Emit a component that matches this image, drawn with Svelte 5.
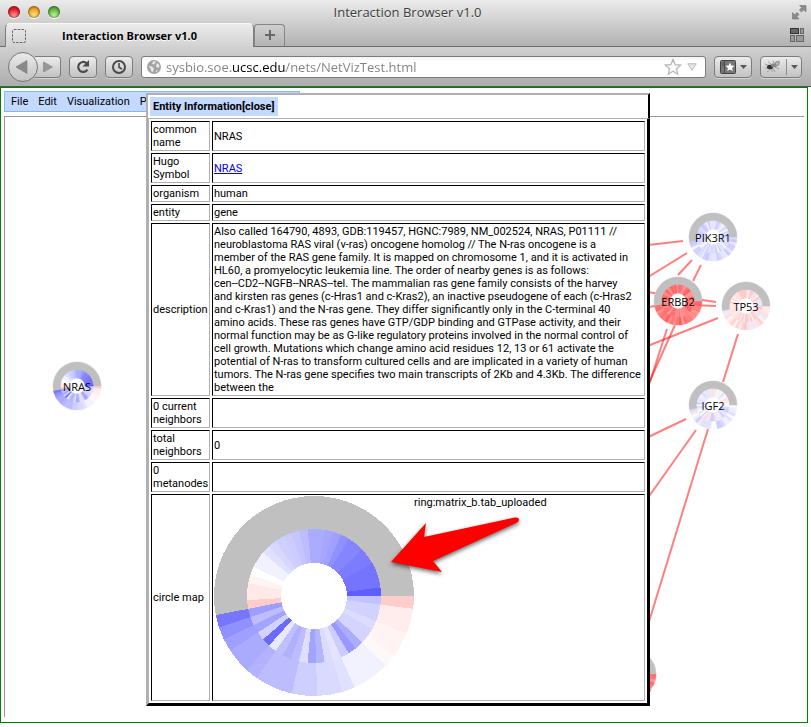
<script>
  const STEP = (Math.PI * 2) / 49;

  // [segment count, fill], clockwise from three o'clock
  const nrasOuter = [
    [1, '#ffcccc'], [2, '#ffecec'], [2, '#fff3f3'], [1, '#fff8f8'], [3, '#f2f2ff'], [1, '#e0e0ff'],
    [2, '#dadaff'], [2, '#ceceff'], [3, '#bcbcff'], [1, '#b2b2ff'], [2, '#aaaaff'], [1, '#9f9fff'],
    [1, '#9090ff'], [1, '#7676ff'], [26, '#c0c0c0']
  ];
  const nrasInner = [
    [1, '#c2c2ff'], [2, '#d2d2ff'], [1, '#dcdcff'], [2, '#d4d4ff'], [1, '#acacff'], [1, '#9898ff'],
    [1, '#ccccff'], [1, '#e4e4ff'], [1, '#dcdcff'], [1, '#b4b4ff'], [1, '#a2a2ff'], [1, '#dedeff'],
    [1, '#bcbcff'], [1, '#b0b0ff'], [1, '#c0c0ff'], [1, '#e8e8ff'], [1, '#6a6aff'], [1, '#d2d2ff'],
    [1, '#a4a4ff'], [1, '#bcbcff'], [1, '#9e9eff'], [1, '#ffcccc'], [2, '#ffe9e9'], [1, '#fff4f4'],
    [1, '#ffffff'], [2, '#f2f2ff'], [1, '#e0e0ff'], [1, '#d8d8ff'], [1, '#ceceff'], [1, '#ccccff'],
    [1, '#c6c6ff'], [1, '#bcbcff'], [2, '#acacff'], [1, '#a6a6ff'], [1, '#a0a0ff'], [1, '#9090ff'],
    [2, '#8585ff'], [2, '#7c7cff'], [3, '#7474ff'], [1, '#5e5eff']
  ];

  function wedge(from, to, r0, r1) {
    const a = from * STEP;
    const b = to * STEP;
    const p = (r, t) => `${(r * Math.cos(t)).toFixed(2)} ${(r * Math.sin(t)).toFixed(2)}`;
    const large = b - a > Math.PI ? 1 : 0;
    return `M${p(r1, a)}A${r1} ${r1} 0 ${large} 1 ${p(r1, b)}L${p(r0, b)}A${r0} ${r0} 0 ${large} 0 ${p(r0, a)}Z`;
  }

  function ring(list, r0, r1) {
    let at = 0;
    return list.map(([n, fill]) => {
      const d = wedge(at, at + n, r0, r1);
      at += n;
      return { d, fill };
    });
  }

  const bigMap = [...ring(nrasOuter, 67, 100), ...ring(nrasInner, 33, 67)];

  function mixed(palette, seed) {
    let s = seed;
    const next = () => {
      s = (s * 16807) % 2147483647;
      return palette[s % palette.length];
    };
    const outer = Array.from({ length: 23 }, () => [1, next()]);
    const inner = Array.from({ length: 49 }, () => [1, next()]);
    return [...ring([...outer, [26, '#c0c0c0']], 67, 100), ...ring(inner, 33, 67)];
  }

  const blues = ['#dcdcff', '#d0d0ff', '#e6e6ff', '#c8c8ff', '#e0e0ff', '#f6f6ff', '#d8d8ff'];
  const reds = ['#ff6a6a', '#ff7c7c', '#ff5c5c', '#ff8a8a', '#ff7070', '#ff9494', '#ff7676'];
  const pinks = ['#ffdcdc', '#ffe6e6', '#ffd0d0', '#fff2f2', '#ffe0e0', '#ffc8c8', '#e8e8ff', '#ffeaea'];
  const pale = ['#e6e6ff', '#dcdcff', '#f0f0ff', '#ffe6e6', '#e2e2ff', '#fafaff', '#cfcfff', '#ececff'];

  const nodes = [
    { name: 'NRAS', x: 77, y: 386, map: bigMap },
    { name: 'PIK3R1', x: 713, y: 237, map: mixed(blues, 91) },
    { name: 'ERBB2', x: 678, y: 301, map: mixed(reds, 417) },
    { name: 'TP53', x: 746, y: 306, map: mixed(pinks, 233) },
    { name: 'IGF2', x: 713, y: 405, map: mixed(pale, 59) },
    { name: '', x: 632, y: 674, map: mixed(reds, 77) }
  ];

  const edges = [
    [640, 246, 683, 241], [640, 282, 687, 253], [678, 275, 692, 260], [693, 281, 701, 265],
    [640, 291, 716, 302], [640, 309, 678, 301], [690, 305, 716, 306], [640, 349, 718, 318], [646, 394, 667, 329],
    [644, 394, 675, 325], [738, 334, 723, 382], [640, 441, 686, 419], [640, 509, 696, 430],
    [640, 651, 708, 429], [646, 692, 651, 690]
  ];

  const menus = ['File', 'Edit', 'Visualization', 'Pa'];

  const lines = [
    'Also called 164790, 4893, GDB:119457, HGNC:7989, NM_002524, NRAS, P01111 //',
    'neuroblastoma RAS viral (v-ras) oncogene homolog // The N-ras oncogene is a',
    'member of the RAS gene family. It is mapped on chromosome 1, and it is activated in',
    'HL60, a promyelocytic leukemia line. The order of nearby genes is as follows:',
    'cen--CD2--NGFB--NRAS--tel. The mammalian ras gene family consists of the harvey',
    'and kirsten ras genes (c-Hras1 and c-Kras2), an inactive pseudogene of each (c-Hras2',
    'and c-Kras1) and the N-ras gene. They differ significantly only in the C-terminal 40',
    'amino acids. These ras genes have GTP/GDP binding and GTPase activity, and their',
    'normal function may be as G-like regulatory proteins involved in the normal control of',
    'cell growth. Mutations which change amino acid residues 12, 13 or 61 activate the',
    'potential of N-ras to transform cultured cells and are implicated in a variety of human',
    'tumors. The N-ras gene specifies two main transcripts of 2Kb and 4.3Kb. The difference',
    'between the'
  ];

  let url = $state('sysbio.soe.ucsc.edu/nets/NetVizTest.html');
</script>

<div class="window">
  <header class="chrome">
    <div class="titlebar">
      <div class="lights">
        <button class="light red" aria-label="Close window"></button>
        <button class="light amber" aria-label="Minimize window"></button>
        <button class="light green" aria-label="Zoom window"></button>
      </div>
      <div class="title">Interaction Browser v1.0</div>
      <button class="bare full" aria-label="Full screen">
        <svg width="16" height="16" viewBox="0 0 16 16" fill="#8b8b8b" stroke="#777" stroke-width=".6">
          <path d="M8.500 1.500H15V8L12.800 5.800L10.500 8L8.400 5.900L10.700 3.600Z" />
          <path d="M1.500 8.500V15H8L5.800 12.800L8 10.500L6 8.400L3.700 10.700Z" />
        </svg>
      </button>
    </div>

    <div class="tabs">
      <div class="tab">
        <svg width="14" height="14" viewBox="0 0 14 14"><rect x=".5" y=".5" width="13" height="13" rx="1.500" fill="none" stroke="#666" stroke-dasharray="2.500 1.200" /></svg>
        <span>Interaction Browser v1.0</span>
      </div>
      <button class="newtab" aria-label="New tab">
        <svg width="12" height="12" viewBox="0 0 12 12"><path d="M6 1V11M1 6H11" stroke="#666" stroke-width="2" /></svg>
      </button>
      <button class="bare groups" aria-label="Tab groups">
        <svg width="14" height="14" viewBox="0 0 14 14" stroke="#666">
          <rect x=".5" y=".5" width="8" height="5" fill="#666" stroke="#333" />
          <rect x="10.500" y=".5" width="3" height="5" fill="#999" />
          <rect x=".5" y="7.500" width="4" height="6" fill="#999" />
          <rect x="6.500" y="7.500" width="7" height="6" fill="#999" />
        </svg>
      </button>
    </div>

    <div class="toolbar">
      <div class="nav">
        <button class="back" aria-label="Back">
          <svg width="14" height="14" viewBox="0 0 14 14"><path d="M1 7L12 .5V13.500Z" fill="#8a8a8a" stroke="#777" stroke-width=".6" /></svg>
        </button>
        <button class="btn forward" aria-label="Forward">
          <svg width="10" height="12" viewBox="0 0 10 12"><path d="M9.500 6L.5 1V11Z" fill="#999" stroke="#808080" stroke-width=".6" /></svg>
        </button>
      </div>
      <button class="btn square" aria-label="Reload">
        <svg width="16" height="16" viewBox="0 0 16 16" fill="none"><path d="M11.500 4.200A5 5 0 1 0 12.400 10.700" stroke="#4a4a4a" stroke-width="2.200" /><path d="M14 1V7.500H7.500Z" fill="#4a4a4a" /></svg>
      </button>
      <button class="btn square" aria-label="History">
        <svg width="16" height="16" viewBox="0 0 16 16" fill="none" stroke="#4a4a4a" stroke-width="2"><circle cx="8" cy="8" r="6" /><path d="M8 4V8.200L11 10.200" stroke-width="1.600" /></svg>
      </button>
      <div class="address">
        <svg width="14" height="14" viewBox="0 0 14 14">
          <circle cx="7" cy="7" r="7" fill="#a2a2a2" />
          <path d="M6 1.500L9 1.200L8.200 3.300L6.500 4.500L5 4ZM10.500 3L12.500 5.500L11.500 8L9 7L9.300 4.500ZM1.500 6L5 6.500L7 8.500L6 12L4.300 11.500L3.500 8.800ZM8.500 11L11 9.500L9.500 12.300Z" fill="#e8e8e8" />
        </svg>
        <input class="url" type="text" aria-label="Address" bind:value={url} />
        <button class="bare" aria-label="Bookmark this page">
          <svg width="18" height="18" viewBox="0 0 18 18"><path d="M9 1.500L11.200 6.600L16.700 7.100L12.500 10.700L13.800 16.200L9 13.300L4.200 16.200L5.500 10.700L1.300 7.100L6.800 6.600Z" fill="#fafafa" stroke="#b4b4b4" stroke-width="1.200" /></svg>
        </button>
        <button class="bare" aria-label="Address history">
          <svg width="10" height="8" viewBox="0 0 10 8"><path d="M.7 .8H9.300L5 7.200Z" fill="#e6e6e6" stroke="#b8b8b8" /></svg>
        </button>
      </div>
      <button class="btn marks" aria-label="Bookmarks">
        <svg width="16" height="14" viewBox="0 0 16 14"><rect x=".5" y=".5" width="15" height="13" rx="1" fill="#777" stroke="#444" /><path d="M4.500 1V13M2 3H4M2 5H4" stroke="#444" stroke-width=".8" /><path d="M10 2.500L11.300 5.500L14.500 5.800L12.100 7.900L12.800 11L10 9.400L7.200 11L7.900 7.900L5.500 5.800L8.700 5.500Z" fill="#fff" /></svg>
        <svg width="7" height="4" viewBox="0 0 7 4"><path d="M0 0H7L3.500 4Z" fill="#5a5a5a" /></svg>
      </button>
      <button class="btn bug" aria-label="Firebug">
        <svg width="18" height="16" viewBox="0 0 18 16" fill="none">
          <path d="M1 5L6 7M4 2.500L8 6M1 9L6 9M3 13L7 9.500M9 9L11 13M11 8L15 10M8 13L8 9" stroke="#999" stroke-width=".9" />
          <ellipse cx="6" cy="8" rx="3" ry="2.200" fill="#333" />
          <ellipse cx="10" cy="6.300" rx="3" ry="2" fill="#888" />
          <circle cx="13.300" cy="4.500" r="2" fill="#b9b9b9" stroke="#888" />
          <path d="M14 3L16 1.500M10 4L9 1.500" stroke="#999" />
        </svg>
        <i></i>
        <svg width="7" height="4" viewBox="0 0 7 4"><path d="M0 0H7L3.500 4Z" fill="#5a5a5a" /></svg>
      </button>
    </div>
  </header>

  <main class="page">
    <nav class="menu">
      {#each menus as item}<button>{item}</button>{/each}
    </nav>
    <div class="canvas"></div>

    <svg class="graph" width="800" height="625" viewBox="4 92 800 625">
      <g stroke="#ff0000" stroke-opacity=".5" stroke-width="2">
        {#each edges as [x1, y1, x2, y2]}<line {x1} {y1} {x2} {y2} />{/each}
      </g>
      {#each nodes as node}
        <g transform={`translate(${node.x} ${node.y})`}>
          <circle r="24" fill="#fff" />
          <g transform="scale(.24)" stroke-width="2">
            {#each node.map as part}<path d={part.d} fill={part.fill} stroke={part.fill} />{/each}
          </g>
          <text y="5" text-anchor="middle">{node.name}</text>
        </g>
      {/each}
    </svg>

    <section class="dialog" aria-label="Entity Information">
      <div class="head"><div class="caption">Entity Information<button>[close]</button></div></div>
      <table>
        <tbody>
          <tr><th scope="row">common name</th><td>NRAS</td></tr>
          <tr><th scope="row">Hugo Symbol</th><td><a href="#nras">NRAS</a></td></tr>
          <tr><th scope="row">organism</th><td>human</td></tr>
          <tr><th scope="row">entity</th><td>gene</td></tr>
          <tr><th scope="row">description</th><td class="text">{#each lines as line}{line}<br />{/each}</td></tr>
          <tr><th scope="row">0 current neighbors</th><td></td></tr>
          <tr><th scope="row">total neighbors</th><td>0</td></tr>
          <tr><th scope="row">0 metanodes</th><td></td></tr>
          <tr>
            <th scope="row">circle map</th>
            <td>
              <div class="map">
                <svg width="200" height="200" viewBox="-100 -100 200 200" shape-rendering="crispEdges">
                  {#each bigMap as part}<path d={part.d} fill={part.fill} />{/each}
                </svg>
                <span>ring:matrix_b.tab_uploaded</span>
              </div>
            </td>
          </tr>
        </tbody>
      </table>
    </section>

    <svg class="arrow" width="140" height="68" viewBox="386 510 140 68">
      <path d="M391 561L426 522L424 536L515 516.500Q519 516 519 519Q519 521 516 522L433 560L442 571Z" fill="#ff0000" />
    </svg>
  </main>
</div>

<style>
  :global(body) { margin: 0; background: #fff; }
  .window {
    display: flex;
    flex-direction: column;
    min-height: 100vh;
    font: 11px/13px Roboto, "Open Sans", sans-serif;
    color: #000;
  }
  button { font: inherit; color: inherit; margin: 0; padding: 0; border: 0; background: none; }
  svg { display: block; flex: none; }
  .bare { display: flex; }

  .chrome { border-bottom: 1px solid #555; background: linear-gradient(#ebebeb, #b2b2b2 46px, #d0d0d0 47px, #adadad); }
  .titlebar { display: flex; align-items: center; height: 23px; padding: 0 4px 0 8px; }
  .lights { display: flex; gap: 8px; flex: 1; }
  .full { flex: 1; justify-content: flex-end; }
  .title { font: 13px/18px "Open Sans", "Noto Sans", sans-serif; color: #3c3c3c; text-shadow: 0 1px 0 #f4f4f4; }
  .light { width: 12px; height: 12px; border-radius: 50%; box-shadow: inset 0 0 2px 1px rgba(0, 0, 0, .4), 0 1px 0 #fff; }
  .red { background: radial-gradient(circle at 50% 90%, #ffb0a8, #e8202c 60%, #c01822); }
  .amber { background: radial-gradient(circle at 50% 90%, #fff0a0, #f5a623 60%, #c87a10); }
  .green { background: radial-gradient(circle at 50% 90%, #d8ffb0, #62b846 60%, #3c8a2c); }

  .tabs { display: flex; align-items: center; height: 23px; padding: 0 7px 0 5px; border-bottom: 1px solid #6c6c6c; }
  .tab {
    display: flex;
    align-items: center;
    box-sizing: border-box;
    width: 249px;
    height: 24px;
    margin-bottom: -1px;
    padding-left: 6px;
    border: 1px solid #7d7d7d;
    border-top-color: #f8f8f8;
    border-bottom: 0;
    border-radius: 5px 5px 0 0;
    background: linear-gradient(#ececec, #d2d2d2);
    font: 700 11px/15px "Open Sans", "Noto Sans", sans-serif;
  }
  .tab span { flex: 1; padding-right: 40px; text-align: center; text-shadow: 0 1px 0 #fff; }
  .tab svg { margin-right: 20px; }
  .newtab {
    display: flex;
    align-items: center;
    justify-content: center;
    width: 31px;
    height: 22px;
    border: 1px solid #868686;
    border-bottom: 0;
    border-radius: 4px 4px 0 0;
    background: linear-gradient(#cfcfcf, #b4b4b4);
  }
  .groups { margin-left: auto; }

  .toolbar { display: flex; align-items: center; gap: 8px; height: 39px; padding: 0 9px 0 8px; }
  .nav { display: flex; align-items: center; }
  .back {
    display: flex;
    align-items: center;
    justify-content: center;
    z-index: 1;
    width: 30px;
    height: 30px;
    padding-right: 3px;
    border: 1px solid #777;
    border-radius: 50%;
    background: linear-gradient(#e9e9e9, #c4c4c4);
    box-sizing: border-box;
  }
  .btn {
    display: flex;
    align-items: center;
    justify-content: center;
    box-sizing: border-box;
    height: 22px;
    border: 1px solid #7c7c7c;
    border-radius: 4px;
    background: linear-gradient(#ececec, #c2c2c2);
    box-shadow: 0 1px 0 rgba(255, 255, 255, .4);
  }
  .forward { width: 26px; margin-left: -3px; border-left: 0; border-radius: 0 4px 4px 0; }
  .square { width: 28px; }
  .address {
    display: flex;
    align-items: center;
    gap: 5px;
    flex: 1;
    box-sizing: border-box;
    height: 22px;
    padding: 0 8px 0 5px;
    border: 1px solid #7c7c7c;
    border-radius: 3px;
    background: linear-gradient(#f4f4f4, #fff 5px);
  }
  .url {
    flex: 1;
    min-width: 0;
    padding: 0;
    border: 0;
    outline: 0;
    font: 13px/18px "Open Sans", "Noto Sans", sans-serif;
    color: transparent;
    background: linear-gradient(90deg, #808080 65px, #000 65px 119px, #808080 119px);
    -webkit-background-clip: text;
    background-clip: text;
  }
  .marks { width: 38px; gap: 4px; }
  .bug { width: 42px; gap: 4px; }
  .bug i { width: 1px; height: 16px; background: #8c8c8c; }

  .page {
    position: relative;
    display: flex;
    flex-direction: column;
    flex: 1;
    margin: 0 3px 4px 0;
    padding: 3px 3px 5px;
    border: 1px solid #008000;
  }
  .menu {
    display: flex;
    align-items: center;
    box-sizing: border-box;
    width: 296px;
    height: 21px;
    padding-left: 6px;
    gap: 10px;
    border: 1px solid #8ab4f8;
    background: #c3d9ff;
  }
  .canvas { flex: 1; margin-top: 4px; border: solid #999; border-width: 1px 0 0 1px; }
  .graph { position: absolute; left: 3px; top: 4px; }
  .graph text { font: 11px "Open Sans", "Noto Sans", sans-serif; }

  .dialog {
    position: absolute;
    left: 145px;
    top: 5px;
    box-sizing: border-box;
    width: 504px;
    border: solid #b0b0b0;
    border-width: 0 3px 3px;
    border-right-color: #000;
    border-bottom-color: #000;
    background: #fff;
  }
  .head { margin: 0 -3px; padding: 2px 1px; border: solid #b0b0b0; border-width: 2px 2px 1px; border-right-color: #000; background: #fff; }
  .caption { display: inline-block; vertical-align: top; padding: 3px; margin-left: 1px; background: #c3d9ff; font-weight: 700; }
  table { width: 100%; border-spacing: 2px; table-layout: fixed; }
  th, td { padding: 1px; border: 1px solid #b0b0b0; border-top-color: #000; border-left-color: #000; text-align: left; font-weight: 400; vertical-align: middle; }
  th { width: 55px; }
  .text { white-space: nowrap; }
  a { color: #0000ee; }
  .map { display: flex; padding-bottom: 3px; }
  .arrow { position: absolute; left: 385px; top: 423px; filter: drop-shadow(0 2px 2px rgba(0, 0, 0, .6)); }
</style>
